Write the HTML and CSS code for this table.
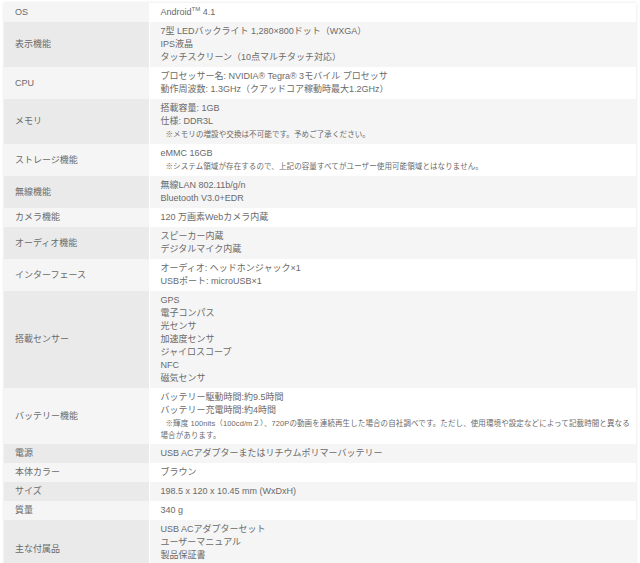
FILE: index.html
```html
<!DOCTYPE html>
<html lang="ja">

<head>
    <meta charset="utf-8">
    <meta name="viewport" content="width=device-width, initial-scale=1.0">
    <title>仕様</title>
    <link rel="stylesheet" href="styles.css">
</head>

<body>
    <table class="spec">
        <colgroup>
            <col class="label">
            <col>
        </colgroup>
        <tr>
            <th>OS</th>
            <td>Android<sup>TM</sup> 4.1</td>
        </tr>
        <tr>
            <th>表示機能</th>
            <td>7型 LEDバックライト 1,280×800ドット（WXGA）<br>IPS液晶<br>タッチスクリーン（10点マルチタッチ対応）</td>
        </tr>
        <tr>
            <th>CPU</th>
            <td>プロセッサー名: NVIDIA® Tegra® 3モバイル プロセッサ<br>動作周波数: 1.3GHz（クアッドコア稼動時最大1.2GHz）</td>
        </tr>
        <tr>
            <th>メモリ</th>
            <td>搭載容量: 1GB<br>仕様: DDR3L<span class="note">※メモリの増設や交換は不可能です。予めご了承ください。</span></td>
        </tr>
        <tr>
            <th>ストレージ機能</th>
            <td>eMMC 16GB<span class="note">※システム領域が存在するので、上記の容量すべてがユーザー使用可能領域とはなりません。</span></td>
        </tr>
        <tr>
            <th>無線機能</th>
            <td>無線LAN 802.11b/g/n<br>Bluetooth V3.0+EDR</td>
        </tr>
        <tr>
            <th>カメラ機能</th>
            <td>120 万画素Webカメラ内蔵</td>
        </tr>
        <tr>
            <th>オーディオ機能</th>
            <td>スピーカー内蔵<br>デジタルマイク内蔵</td>
        </tr>
        <tr>
            <th>インターフェース</th>
            <td>オーディオ: ヘッドホンジャック×1<br>USBポート: microUSB×1</td>
        </tr>
        <tr>
            <th>搭載センサー</th>
            <td>GPS<br>電子コンパス<br>光センサ<br>加速度センサ<br>ジャイロスコープ<br>NFC<br>磁気センサ</td>
        </tr>
        <tr>
            <th>バッテリー機能</th>
            <td>バッテリー駆動時間:約9.5時間<br>バッテリー充電時間:約4時間<span class="note">※輝度 100nits（100cd/m２）、720Pの動画を連続再生した場合の自社調べです。ただし、使用環境や設定などによって記載時間と異なる</span><span class="note wrap">場合があります。</span></td>
        </tr>
        <tr>
            <th>電源</th>
            <td>USB ACアダプターまたはリチウムポリマーバッテリー</td>
        </tr>
        <tr>
            <th>本体カラー</th>
            <td>ブラウン</td>
        </tr>
        <tr>
            <th>サイズ</th>
            <td>198.5 x 120 x 10.45 mm (WxDxH)</td>
        </tr>
        <tr>
            <th>質量</th>
            <td>340 g</td>
        </tr>
        <tr>
            <th>主な付属品</th>
            <td>USB ACアダプターセット<br>ユーザーマニュアル<br>製品保証書<span class="note far">※付属品の仕様・外観は、改良のため予告なく変更することがあります。</span></td>
        </tr>
    </table>
</body>

</html>
```

FILE: styles.css
```css
body {
    margin: 0;
    padding: 3px 4px;
    background-color: #ffffff;
    font-family: "Liberation Sans", "Noto Sans CJK JP", sans-serif;
    font-size: 9px;
    color: #6a6a6a;
}

.spec {
    width: 632px;
    table-layout: fixed;
    border-collapse: collapse;
    box-shadow: 0 0 3px rgba(0, 0, 0, 0.12);
}

.label {
    width: 145px;
}

.spec th,
.spec td {
    padding: 3px 11px;
    line-height: 13px;
    text-align: left;
    vertical-align: middle;
    font-weight: normal;
}

.spec th {
    background-color: #f5f5f5;
    border-right: 1px solid #ffffff;
}

.spec td {
    background-color: #ffffff;
}

.spec tr:nth-child(even) th {
    background-color: #eaeaea;
}

.spec tr:nth-child(even) td {
    background-color: #f5f5f5;
}

sup {
    font-size: 6px;
    line-height: 0;
}

.note {
    display: block;
    padding: 1px 0 1px 5px;
    font-size: 7.5px;
    letter-spacing: 0.1px;
    line-height: 11px;
    white-space: nowrap;
}

.note.wrap {
    padding: 0;
}

.note.far {
    padding-left: 50px;
}
```
